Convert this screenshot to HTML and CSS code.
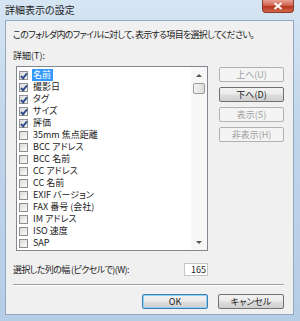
FILE: index.html
```html
<!DOCTYPE html>
<html lang="ja">
<head>
    <meta charset="UTF-8">
    <title>詳細表示の設定</title>
    <link rel="stylesheet" href="styles.css">
</head>
<body>
    <div class="window">
        <div class="titlebar">
            <span class="title">詳細表示の設定</span>
            <span class="close">
                <svg width="10" height="8" viewBox="0 0 10 8"><path d="M1.5 1 L8.5 7 M8.5 1 L1.5 7" stroke="#fff" stroke-width="2"/></svg>
            </span>
        </div>
        <div class="client">
            <p class="desc">このフォルダ内のファイルに対して、表示する項目を選択してください。</p>
            <p class="label">詳細(T):</p>
            <div class="main">
                <div class="listbox">
                    <ul class="items">
                        <li><span class="check on"></span><span class="name selected">名前</span></li>
                        <li><span class="check on"></span><span class="name">撮影日</span></li>
                        <li><span class="check on"></span><span class="name">タグ</span></li>
                        <li><span class="check on"></span><span class="name">サイズ</span></li>
                        <li><span class="check on"></span><span class="name">評価</span></li>
                        <li><span class="check"></span><span class="name">35mm 焦点距離</span></li>
                        <li><span class="check"></span><span class="name">BCC アドレス</span></li>
                        <li><span class="check"></span><span class="name">BCC 名前</span></li>
                        <li><span class="check"></span><span class="name">CC アドレス</span></li>
                        <li><span class="check"></span><span class="name">CC 名前</span></li>
                        <li><span class="check"></span><span class="name">EXIF バージョン</span></li>
                        <li><span class="check"></span><span class="name">FAX 番号 (会社)</span></li>
                        <li><span class="check"></span><span class="name">IM アドレス</span></li>
                        <li><span class="check"></span><span class="name">ISO 速度</span></li>
                        <li><span class="check"></span><span class="name">SAP</span></li>
                    </ul>
                    <div class="scrollbar">
                        <span class="arrow up"></span>
                        <span class="thumb"></span>
                        <span class="track"></span>
                        <span class="arrow down"></span>
                    </div>
                </div>
                <div class="side">
                    <button class="btn" disabled>上へ(U)</button>
                    <button class="btn">下へ(D)</button>
                    <button class="btn" disabled>表示(S)</button>
                    <button class="btn" disabled>非表示(H)</button>
                </div>
            </div>
            <div class="width-row">
                <span class="tight">選択した列の幅 (ピクセルで)(W):</span>
                <span class="num">165</span>
            </div>
            <div class="sep"></div>
            <div class="footer">
                <button class="btn default">OK</button>
                <button class="btn">キャンセル</button>
            </div>
        </div>
    </div>
</body>
</html>
```

FILE: styles.css
```css
body {
    margin: 0;
    padding: 0;
    font-family: "Noto Sans CJK JP", sans-serif;
    font-size: 9px;
    font-feature-settings: "palt";
    color: #1e1e1e;
}
.window {
    width: 300px;
    height: 321px;
    background: linear-gradient(to bottom, #d6e5f3 0%, #c0d5ea 40%, #b6cde6 100%);
    display: flex;
    flex-direction: column;
    overflow: hidden;
}
.titlebar {
    height: 20px;
    display: flex;
    align-items: flex-start;
    justify-content: space-between;
    flex-shrink: 0;
}
.title {
    font-size: 10px;
    line-height: 12px;
    margin: 4px 0 0 5px;
    color: #1b1b1b;
}
.close {
    width: 32px;
    height: 13px;
    margin-right: 6px;
    border: 1px solid #8a3a2c;
    border-top: none;
    border-radius: 0 0 4px 4px;
    background: linear-gradient(to bottom, #e8a093 0%, #d0634f 45%, #b8361f 55%, #d2694c 100%);
    display: flex;
    align-items: center;
    justify-content: center;
    box-sizing: border-box;
}
.client {
    margin: 0 6px 6px 5px;
    flex: 1;
    background: #f0f0f0;
    border: 1px solid #93a9c1;
    padding: 0 9px 0 7px;
    display: flex;
    flex-direction: column;
}
.desc {
    margin: 8px 0 0 0;
    line-height: 12px;
    letter-spacing: -0.7px;
}
.label {
    margin: 9px 0 0 0;
    line-height: 12px;
}
.main {
    display: flex;
    margin-top: 4px;
    gap: 11px;
}
.listbox {
    width: 192px;
    height: 185px;
    margin-left: 3px;
    border: 1px solid #828790;
    background: #fff;
    box-sizing: border-box;
    display: flex;
}
.items {
    list-style: none;
    margin: 0;
    padding: 2px 0 0 2px;
    flex: 1;
}
.items li {
    height: 12px;
    display: flex;
    align-items: center;
    line-height: 12px;
}
.check {
    width: 9px;
    height: 9px;
    box-sizing: border-box;
    border: 1px solid #8f8f8f;
    background: linear-gradient(135deg, #dcdcdc, #f8f8f8);
    margin-right: 4px;
    position: relative;
}
.check.on::after {
    content: "";
    position: absolute;
    left: 2px;
    top: 0px;
    width: 2px;
    height: 5px;
    border: solid #34508a;
    border-width: 0 2px 2px 0;
    transform: rotate(40deg);
}
.name {
    padding: 0 2px 0 1px;
    color: #222;
}
.name.selected {
    background: #3399ff;
    color: #fff;
}
.scrollbar {
    width: 16px;
    background: #f7f7f7;
    display: flex;
    flex-direction: column;
    align-items: center;
}
.arrow {
    width: 0;
    height: 0;
    border-left: 3px solid transparent;
    border-right: 3px solid transparent;
    margin: 7px 0 6px;
}
.arrow.up {
    border-bottom: 3px solid #555;
}
.arrow.down {
    border-top: 3px solid #555;
    margin: 0 0 6px;
}
.thumb {
    width: 12px;
    height: 11px;
    box-sizing: border-box;
    border: 1px solid #9a9a9a;
    border-radius: 2px;
    background: linear-gradient(to right, #f4f4f4, #dcdcdc);
}
.track {
    flex: 1;
}
.side {
    display: flex;
    flex-direction: column;
    gap: 5px;
    padding-top: 1px;
}
.btn {
    width: 65px;
    height: 15px;
    padding: 0;
    font-family: inherit;
    font-size: 9px;
    font-feature-settings: "palt";
    line-height: 13px;
    color: #1e1e1e;
    border: 1px solid #707070;
    border-radius: 2px;
    background: linear-gradient(to bottom, #f2f2f2 0%, #ebebeb 48%, #dddddd 52%, #cfcfcf 100%);
}
.btn:disabled {
    color: #a0a0a0;
    border-color: #adb2b5;
    background: #f4f4f4;
}
.btn.default {
    border-color: #3c7fb1;
    box-shadow: inset 0 0 0 1px #8fd3f8;
}
.width-row {
    display: flex;
    justify-content: space-between;
    align-items: center;
    margin-top: 12px;
    padding-right: 76px;
    line-height: 12px;
}
.tight {
    letter-spacing: -0.6px;
}
.num {
    width: 24px;
    height: 13px;
    box-sizing: border-box;
    background: #fff;
    border: 1px solid #c5c5c5;
    text-align: right;
    padding-right: 1px;
    line-height: 11px;
}
.sep {
    height: 0;
    border-top: 1px solid #a0a0a0;
    border-bottom: 1px solid #fff;
    margin-top: 8px;
}
.footer {
    display: flex;
    justify-content: flex-end;
    gap: 10px;
    margin-top: 8px;
}
.footer .btn {
    width: 66px;
}
```
